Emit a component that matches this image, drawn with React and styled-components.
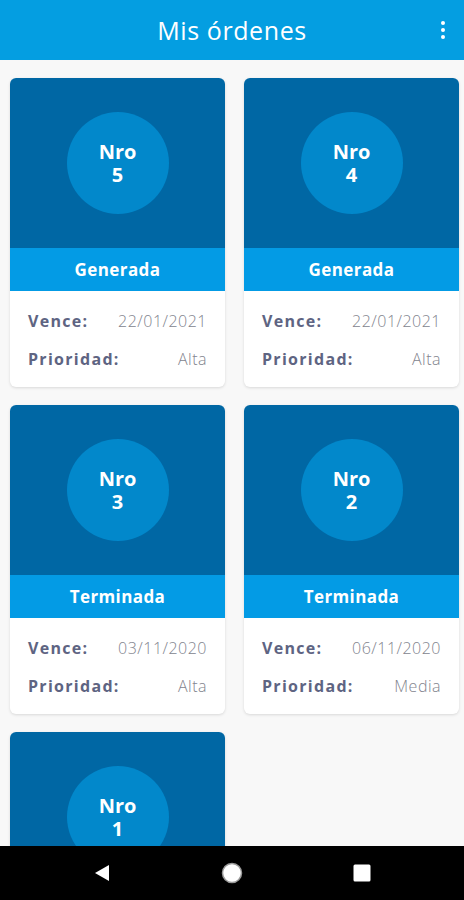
import React from "react";
import styled, { createGlobalStyle } from "styled-components";

const GlobalStyle = createGlobalStyle`
  body {
    margin: 0;
    background: #f8f8f8;
    font-family: "Open Sans", "Noto Sans", sans-serif;
  }
`;

const Screen = styled.div`
  min-height: 900px;
  background: #f8f8f8;
`;

const Header = styled.header`
  height: 60px;
  background: #049ee1;
  display: grid;
  grid-template-columns: 1fr auto 1fr;
  align-items: center;
  color: white;
`;

const Title = styled.h1`
  grid-column: 2;
  margin: 0 0 1px;
  font-size: 25px;
  font-weight: 500;
  letter-spacing: 0.6px;
`;

const Kebab = styled.div`
  justify-self: end;
  margin-right: 19px;
  display: flex;
  flex-direction: column;
  gap: 3px;

  span {
    width: 4px;
    height: 4px;
    border-radius: 50%;
    background: white;
  }
`;

const Grid = styled.main`
  display: grid;
  grid-template-columns: 215px 215px;
  column-gap: 19px;
  row-gap: 18px;
  padding: 18px 5px 0 10px;
`;

const Card = styled.article`
  background: white;
  border-radius: 6px;
  overflow: hidden;
  box-shadow: 0 1px 3px rgba(0, 0, 0, 0.13);
`;

const Cover = styled.div`
  height: 170px;
  background: #0067a4;
  display: flex;
  align-items: center;
  justify-content: center;
`;

const Badge = styled.div`
  width: 102px;
  height: 102px;
  border-radius: 50%;
  background: #0288cb;
  color: white;
  display: flex;
  align-items: center;
  justify-content: center;
  text-align: center;
  font-size: 20px;
  font-weight: 700;
  line-height: 23px;
`;

const Status = styled.div`
  height: 43px;
  background: #039be5;
  color: white;
  display: flex;
  align-items: center;
  justify-content: center;
  font-size: 17px;
  font-weight: 700;
  letter-spacing: 0.4px;
`;

const Details = styled.div`
  padding: 11px 18px 9px;
`;

const Row = styled.div`
  height: 38px;
  display: flex;
  align-items: center;
  justify-content: space-between;
`;

const Label = styled.span`
  color: #5e6482;
  font-size: 16px;
  font-weight: 700;
  letter-spacing: 1.3px;
`;

const Value = styled.span`
  color: #82848e;
  font-size: 16px;
  font-weight: 300;
  letter-spacing: 0.5px;
`;

const NavBar = styled.nav`
  position: fixed;
  left: 0;
  right: 0;
  bottom: 0;
  height: 54px;
  background: #000;
  display: grid;
  grid-template-columns: repeat(3, 130px);
  justify-content: center;
  align-items: center;
  justify-items: center;
`;

const orders = [
  { nro: 5, status: "Generada", due: "22/01/2021", priority: "Alta" },
  { nro: 4, status: "Generada", due: "22/01/2021", priority: "Alta" },
  { nro: 3, status: "Terminada", due: "03/11/2020", priority: "Alta" },
  { nro: 2, status: "Terminada", due: "06/11/2020", priority: "Media" },
  { nro: 1, status: "Terminada", due: "01/11/2020", priority: "Baja" },
];

const OrderCard = ({ order }) => (
  <Card>
    <Cover>
      <Badge>
        Nro
        <br />
        {order.nro}
      </Badge>
    </Cover>
    <Status>{order.status}</Status>
    <Details>
      <Row>
        <Label>Vence:</Label>
        <Value>{order.due}</Value>
      </Row>
      <Row>
        <Label>Prioridad:</Label>
        <Value>{order.priority}</Value>
      </Row>
    </Details>
  </Card>
);

export default function App() {
  return (
    <Screen>
      <GlobalStyle />
      <Header>
        <Title>Mis órdenes</Title>
        <Kebab>
          <span />
          <span />
          <span />
        </Kebab>
      </Header>
      <Grid>
        {orders.map((o) => (
          <OrderCard key={o.nro} order={o} />
        ))}
      </Grid>
      <NavBar>
        <svg width="18" height="18" viewBox="0 0 18 18">
          <path d="M16 1 L16 17 L2 9 Z" fill="white" />
        </svg>
        <svg width="22" height="22" viewBox="0 0 22 22">
          <circle cx="11" cy="11" r="9.5" fill="white" stroke="#9a9a9a" strokeWidth="1.5" />
        </svg>
        <svg width="18" height="18" viewBox="0 0 18 18">
          <rect x="0.5" y="0.5" width="17" height="17" rx="1.5" fill="white" />
        </svg>
      </NavBar>
    </Screen>
  );
}
